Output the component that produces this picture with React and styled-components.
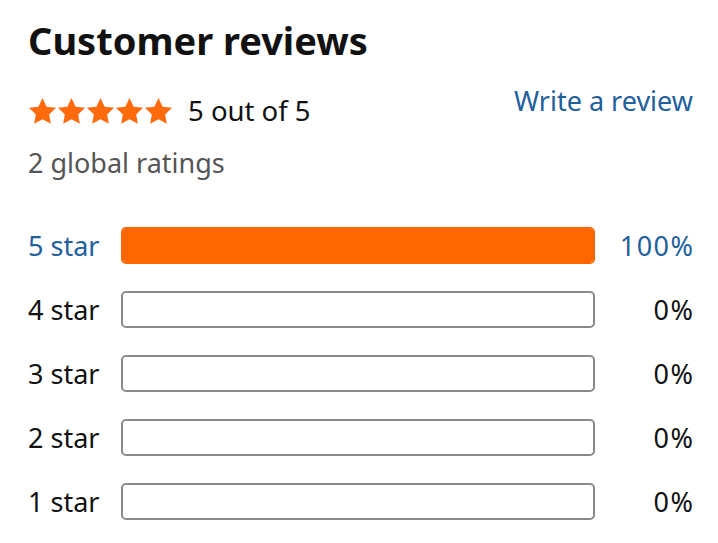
import React from "react";
import styled, { createGlobalStyle } from "styled-components";

const GlobalStyle = createGlobalStyle`
  body {
    margin: 0;
    background: #ffffff;
    font-family: "Noto Sans", "Liberation Sans", sans-serif;
  }
`;

const Page = styled.div`
  width: 718px;
  height: 543px;
  box-sizing: border-box;
  padding: 14px 25px 0 28px;
  background: #fff;
`;

const Title = styled.h2`
  margin: 0;
  font-size: 38px;
  font-weight: 700;
  color: #111;
  line-height: 52px;
`;

const SummaryRow = styled.div`
  display: flex;
  justify-content: space-between;
  align-items: flex-start;
  margin-top: 28px;
`;

const RatingLine = styled.div`
  display: flex;
  align-items: center;
  gap: 15px;
`;

const Stars = styled.div`
  display: flex;
`;

const RatingText = styled.span`
  font-size: 27.5px;
  color: #111;
  line-height: 34px;
`;

const WriteLink = styled.a`
  font-size: 27px;
  color: #22609c;
  text-decoration: none;
  line-height: 34px;
  margin-top: -10px;
`;

const GlobalRatings = styled.div`
  margin-top: 18px;
  font-size: 27px;
  color: #555;
  line-height: 34px;
`;

const Histogram = styled.div`
  display: flex;
  flex-direction: column;
  gap: 27px;
  margin-top: 47px;
`;

const Row = styled.div`
  display: grid;
  grid-template-columns: 93px 474px 1fr;
  align-items: center;
`;

const Label = styled.span`
  font-size: 27px;
  color: ${(p) => (p.$active ? "#22609c" : "#111")};
`;

const Meter = styled.div`
  height: 37px;
  box-sizing: border-box;
  border-radius: 5px;
  border: 2px solid ${(p) => (p.$filled ? "#ff6600" : "#8a8a8a")};
  background: #fff;
  overflow: hidden;
`;

const Fill = styled.div`
  height: 100%;
  background: #ff6600;
`;

const Percent = styled.span`
  text-align: right;
  font-size: 27px;
  letter-spacing: 1.5px;
  margin-right: -1.5px;
  color: ${(p) => (p.$active ? "#22609c" : "#111")};
`;

const Star = () => (
  <svg width="29" height="28" viewBox="0 0 24 23">
    <path
      d="M12 0.8l3.4 7.1 7.8 1-5.7 5.4 1.4 7.7L12 18.3 5.1 22l1.4-7.7L0.8 8.9l7.8-1z"
      fill="#ff6a0d"
    />
  </svg>
);

const rows = [
  { label: "5 star", pct: 100 },
  { label: "4 star", pct: 0 },
  { label: "3 star", pct: 0 },
  { label: "2 star", pct: 0 },
  { label: "1 star", pct: 0 },
];

const App = () => (
  <Page>
    <GlobalStyle />
    <Title>Customer reviews</Title>
    <SummaryRow>
      <RatingLine>
        <Stars>
          {[0, 1, 2, 3, 4].map((i) => (
            <Star key={i} />
          ))}
        </Stars>
        <RatingText>5 out of 5</RatingText>
      </RatingLine>
      <WriteLink href="#">Write a review</WriteLink>
    </SummaryRow>
    <GlobalRatings>2 global ratings</GlobalRatings>
    <Histogram>
      {rows.map((r) => (
        <Row key={r.label}>
          <Label $active={r.pct > 0}>{r.label}</Label>
          <Meter $filled={r.pct > 0}>
            {r.pct > 0 && <Fill style={{ width: `${r.pct}%` }} />}
          </Meter>
          <Percent $active={r.pct > 0}>{r.pct}%</Percent>
        </Row>
      ))}
    </Histogram>
  </Page>
);

export default App;
